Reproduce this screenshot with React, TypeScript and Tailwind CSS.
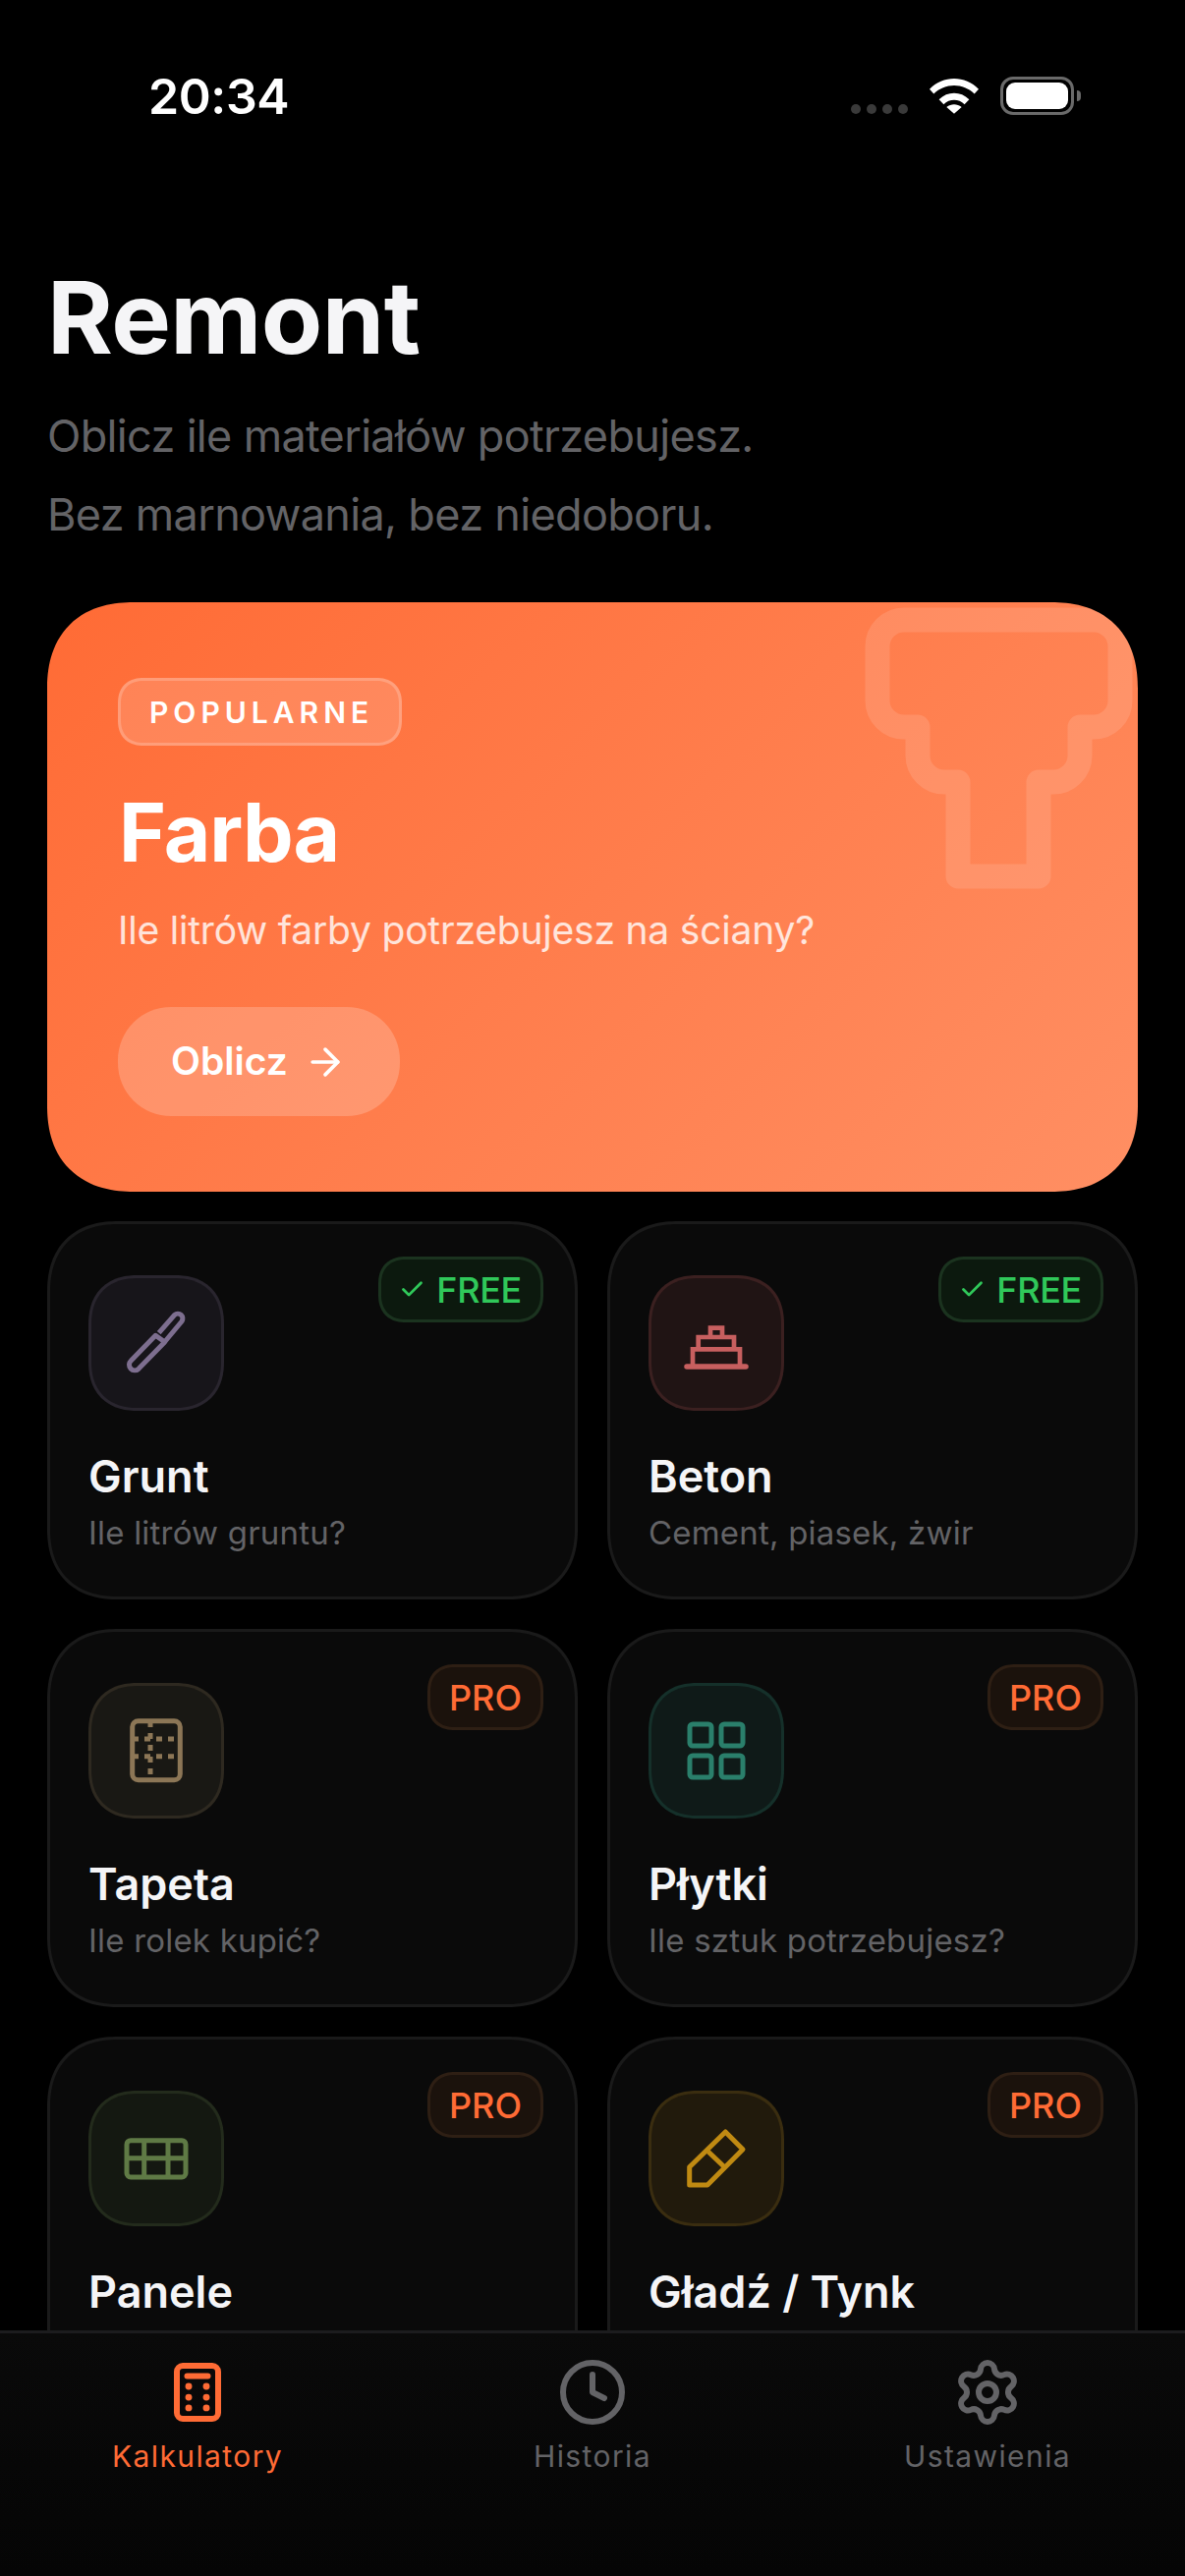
import { ArrowRight, Check, Clock, Settings } from "lucide-react";
import type { ReactNode } from "react";

type Tool = {
  name: string;
  sub: string;
  free: boolean;
  box: string;
  icon: ReactNode;
};

const GruntIcon = (
  <svg width="72" height="72" viewBox="0 0 72 72" fill="none" stroke="#7d6e8f" strokeWidth="5" strokeLinejoin="round">
    <path d="M38.700 25.700 54.700 7.300A5 5 0 0 1 62 14L45.300 34" />
    <path d="M35.300 28.300 10.300 54A5.500 5.500 0 0 0 18 62.300L44.700 35Z" />
  </svg>
);

const BetonIcon = (
  <svg width="72" height="72" viewBox="0 0 72 72" fill="none" stroke="#c75f5f" strokeWidth="4.700">
    <path d="M6 60h60" strokeWidth="5.500" strokeLinecap="round" />
    <path d="M12 60V42.300H60V60M17.700 42V30H54V42M30 30V20.700H42V30" />
  </svg>
);

const TapetaIcon = (
  <svg width="72" height="72" viewBox="0 0 72 72" fill="none" stroke="#8c7656" strokeWidth="5">
    <rect x="11.700" y="5.700" width="48.600" height="60" rx="6" />
    <path d="M30 6V60M12 24H54M12 41.700H54" strokeDasharray="6 6" />
  </svg>
);

const PlytkiIcon = (
  <svg width="72" height="72" viewBox="0 0 72 72" fill="none" stroke="#2a7f6b" strokeWidth="5">
    <rect x="9" y="9" width="22" height="22" rx="3" />
    <rect x="41" y="9" width="22" height="22" rx="3" />
    <rect x="9" y="41" width="22" height="22" rx="3" />
    <rect x="41" y="41" width="22" height="22" rx="3" />
  </svg>
);

const PaneleIcon = (
  <svg width="72" height="72" viewBox="0 0 72 72" fill="none" stroke="#5f7a45" strokeWidth="5">
    <rect x="6" y="17.700" width="60" height="37.300" rx="4" />
    <path d="M6 35.700H66M23.700 17.700V55M48 17.700V55" />
  </svg>
);

const GladzIcon = (
  <svg width="72" height="72" viewBox="0 0 72 72" fill="none" stroke="#c08a12" strokeWidth="5" strokeLinejoin="round">
    <path d="M45.300 9 63 26.700 27 63H8.700V44.700Z" />
    <path d="M27.700 29 44.300 44.700" />
  </svg>
);

const tools: Tool[] = [
  { name: "Grunt", sub: "Ile litrów gruntu?", free: true, box: "bg-[#17151a] border-[#29252e]", icon: GruntIcon },
  { name: "Beton", sub: "Cement, piasek, żwir", free: true, box: "bg-[#201414] border-[#3b2020]", icon: BetonIcon },
  { name: "Tapeta", sub: "Ile rolek kupić?", free: false, box: "bg-[#191814] border-[#2e2920]", icon: TapetaIcon },
  { name: "Płytki", sub: "Ile sztuk potrzebujesz?", free: false, box: "bg-[#0f1a18] border-[#15302a]", icon: PlytkiIcon },
  { name: "Panele", sub: "Ile paczek kupić?", free: false, box: "bg-[#141811] border-[#232b1c]", icon: PaneleIcon },
  { name: "Gładź / Tynk", sub: "Ile worków potrzebujesz?", free: false, box: "bg-[#211a0c] border-[#3a2d10]", icon: GladzIcon },
];

function ToolCard({ tool }: { tool: Tool }) {
  return (
    <div className="relative h-[385px] rounded-[72px] border-[3px] border-[#1a1a1a] bg-[#0a0a0a] pl-[39px] pt-[52px] [corner-shape:superellipse(1.2)]">
      {tool.free ? (
        <div className="absolute right-[32px] top-[33px] flex h-[67px] items-center gap-[11px] rounded-[28px] border-[3px] border-[#1b331f] bg-[#0c190e] pl-[18px] pr-[19px] text-[36px] font-medium tracking-[-0.3px] text-[#30c85a] [corner-shape:superellipse(1.2)]">
          <Check size={27} strokeWidth={2.5} />
          <span>FREE</span>
        </div>
      ) : (
        <div className="absolute right-[32px] top-[33px] flex h-[67px] items-center rounded-[28px] border-[3px] border-[#2e1f14] bg-[#1b120c] px-[19px] text-[36px] font-medium text-[#ff6b35] [corner-shape:superellipse(1.2)]">
          PRO
        </div>
      )}
      <div className={`flex h-[138px] w-[138px] items-center justify-center rounded-[50px] border-[3px] [corner-shape:superellipse(1.2)] ${tool.box}`}>
        {tool.icon}
      </div>
      <div className="mt-[40px] text-[45px] font-semibold leading-[54px] text-[#f5f5f7]">{tool.name}</div>
      <div className="mt-[6px] text-[33px] leading-[48px] tracking-[0.2px] text-[#636366]">{tool.sub}</div>
    </div>
  );
}

function NavItem({ label, active, children }: { label: string; active?: boolean; children: ReactNode }) {
  return (
    <div className={`flex flex-col items-center ${active ? "text-[#ff6b35]" : "text-[#636366]"}`}>
      {children}
      <span className="mt-[11px] text-[30px] leading-[36px] tracking-[1.4px]">{label}</span>
    </div>
  );
}

export default function App() {
  return (
    <div className="relative h-[2622px] w-[1206px] overflow-hidden bg-black font-['Inter',sans-serif]">
      {/* status bar */}
      <div className="flex h-[262px] items-start justify-between pl-[151px] pr-[113px] pt-[70px]">
        <span className="text-[50px] font-semibold leading-[56px] tracking-[-0.4px] text-white">20:34</span>
        <div className="flex items-start gap-[22px] pt-[8px]">
          <div className="mt-[28px] flex gap-[6px]">
            <span className="h-[10px] w-[10px] rounded-full bg-[#3a3a3a]" />
            <span className="h-[10px] w-[10px] rounded-full bg-[#3a3a3a]" />
            <span className="h-[10px] w-[10px] rounded-full bg-[#3a3a3a]" />
            <span className="h-[10px] w-[10px] rounded-full bg-[#3a3a3a]" />
          </div>
          <svg className="mt-[1px]" width="50" height="37" viewBox="0 0 52 38" fill="white">
            <path d="M0 12C14-3 38-3 52 12l-4.500 5C36 5 16 5 4.500 17zM10 23c9-9 23-9 32 0l-5 5c-6-6-16-6-22 0zM18 31c5-4 11-4 16 0l-8 7z" />
          </svg>
          <div className="relative flex h-[39px] w-[75px] items-center justify-center rounded-[13px] border-[3px] border-[#6a6a6a]">
            <div className="h-[27px] w-[63px] rounded-[9px] bg-white" />
            <div className="absolute -right-[10px] top-[11px] h-[11px] w-[4px] rounded-r-full bg-[#6a6a6a]" />
          </div>
        </div>
      </div>

      {/* header */}
      <div className="px-[48px]">
        <h1 className="text-[102px] font-bold leading-[122px] tracking-[-0.6px] text-[#f5f5f7]">Remont</h1>
        <p className="mt-[20px] text-[45px] leading-[80px] tracking-[-0.67px] text-[#636366]">Oblicz ile materiałów potrzebujesz.</p>
        <p className="text-[45px] leading-[80px] tracking-[-0.67px] text-[#636366]">Bez marnowania, bez niedoboru.</p>
      </div>

      {/* hero */}
      <div className="relative mx-[48px] mt-[49px] h-[600px] overflow-hidden rounded-[88px] bg-[linear-gradient(135deg,#ff6b35,#ff8f63)] pl-[72px] pt-[77px] [corner-shape:superellipse(1.2)]">
        <svg className="absolute right-[-22px] top-[-23px]" width="340" height="340" viewBox="0 0 340 340" fill="none" stroke="white" strokeOpacity="0.12" strokeWidth="25" strokeLinejoin="round">
          <path d="M80 41H273a27 27 0 0 1 27 27V123a27 27 0 0 1-27 27H259V179a27 27 0 0 1-27 27H217V302H135V206H121a27 27 0 0 1-27-27V150H80a27 27 0 0 1-27-27V68a27 27 0 0 1 27-27Z" />
        </svg>
        <div className="inline-flex h-[69px] items-center rounded-[26px] border-[3px] border-white/20 bg-white/15 pb-[0px] pl-[29px] pr-[26px] pt-[2px] text-[30px] font-semibold tracking-[5px] text-white [corner-shape:superellipse(1.2)]">
          POPULARNE
        </div>
        <h2 className="mt-[39px] ml-[1px] text-[82px] font-bold leading-[100px] tracking-[-1px] text-white">Farba</h2>
        <p className="mt-[24px] text-[39px] leading-[50px] tracking-[-0.2px] text-white/80">Ile litrów farby potrzebujesz na ściany?</p>
        <div className="mt-[53px] inline-flex h-[111px] items-center gap-[16px] rounded-[54px] bg-white/20 pl-[54px] pr-[54px] text-[39px] font-semibold text-white">
          Oblicz
          <ArrowRight size={44} strokeWidth={2} />
        </div>
      </div>

      {/* tools */}
      <div className="mx-[48px] mt-[30px] grid grid-cols-2 gap-[30px]">
        {tools.map((tool) => (
          <ToolCard key={tool.name} tool={tool} />
        ))}
      </div>

      {/* bottom nav */}
      <div className="absolute inset-x-0 bottom-0 grid h-[250px] grid-cols-3 border-t-[3px] border-[#1c1c1e] bg-gradient-to-b from-[#0a0a0a] to-[#050505] pt-[24px]">
        <NavItem label="Kalkulatory" active>
          <svg width="72" height="72" viewBox="0 0 24 24" fill="none" stroke="currentColor" strokeWidth="2" strokeLinecap="round">
            <rect x="5" y="3" width="14" height="18" rx="2" />
            <path d="M8.500 6.500h7" />
            <path d="M9 10h.01M15 10h.01M9 13.700h.01M15 13.700h.01M9 17.300h.01M15 17.300h.01" strokeWidth="2.300" />
          </svg>
        </NavItem>
        <NavItem label="Historia">
          <Clock size={72} strokeWidth={2} />
        </NavItem>
        <NavItem label="Ustawienia">
          <Settings size={72} strokeWidth={2} />
        </NavItem>
      </div>
    </div>
  );
}
